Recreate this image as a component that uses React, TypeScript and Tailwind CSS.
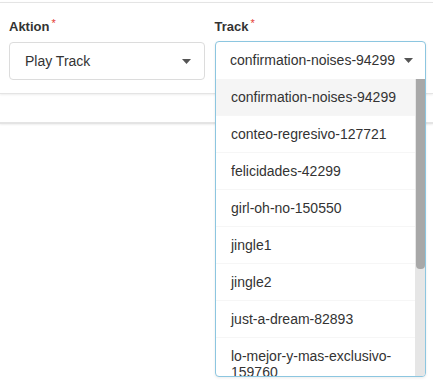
import React from 'react';

const tracks = [
  'confirmation-noises-94299',
  'conteo-regresivo-127721',
  'felicidades-42299',
  'girl-oh-no-150550',
  'jingle1',
  'jingle2',
  'just-a-dream-82893',
  'lo-mejor-y-mas-exclusivo-159760',
];

function Caret() {
  return (
    <svg width="9" height="5" viewBox="0 0 9 5" className="shrink-0">
      <path d="M0 0 L9 0 L4.5 5 Z" fill="#555" />
    </svg>
  );
}

function Label({ text }: { text: string }) {
  return (
    <div className="h-5 text-[13px] leading-5 font-bold text-[#333] flex">
      <span>{text}</span>
      <span className="text-[#e53935] text-[11px] leading-[12px] ml-[2px] font-normal">*</span>
    </div>
  );
}

export default function App() {
  return (
    <div className="relative h-[384px] w-[433px] bg-white overflow-hidden font-['Liberation_Sans',Arial,sans-serif]">
      {/* settings card */}
      <div className="mt-[2px] border-t border-b border-[#e4e4e4] shadow-[0_1px_2px_rgba(0,0,0,0.07)] px-[9px] pt-[14px] pb-[13px]">
        <div className="flex gap-[10px]">
          <div className="w-[197px] flex flex-col gap-[5px]">
            <Label text="Aktion" />
            <div className="h-[38px] border border-[#dcdcdc] rounded-[4px] flex items-center justify-between pl-[15px] pr-[13px] text-[14px] text-[#333]">
              <span>Play Track</span>
              <Caret />
            </div>
          </div>
          <div className="w-[211px] flex flex-col gap-[5px]">
            <Label text="Track" />
            <div className="h-[38px]" />
          </div>
        </div>
      </div>

      <div className="mt-[28px] border-t border-b border-[#e4e4e4] shadow-[0_1px_2px_rgba(0,0,0,0.07)] h-[2px]" />

      {/* open track select */}
      <div className="absolute left-[215px] top-[41px] w-[211px] h-[336px] border border-[#8cc6e0] rounded-[4px] bg-white flex flex-col overflow-hidden shadow-[0_1px_3px_rgba(0,0,0,0.08)]">
        <div className="h-[37px] shrink-0 flex items-center justify-between pl-[14px] pr-[12px] text-[14px] text-[#333]">
          <span>confirmation-noises-94299</span>
          <Caret />
        </div>
        <div className="flex flex-1 min-h-0">
          <div className="flex-1 min-w-0">
            {tracks.map((t, i) => (
              <div
                key={t}
                className={`px-[15px] pr-[8px] py-[10px] text-[14px] leading-4 text-[#333] border-b border-[#f6f6f6] ${i === 0 ? 'bg-[#f5f5f5]' : ''}`}
              >
                {t}
              </div>
            ))}
          </div>
          {/* scrollbar */}
          <div className="w-[10px] shrink-0 bg-[#e6e6e6] flex justify-center">
            <div className="w-[9px] h-[190px] bg-[#a8a8a8] rounded-b-[4px]" />
          </div>
        </div>
      </div>
    </div>
  );
}
